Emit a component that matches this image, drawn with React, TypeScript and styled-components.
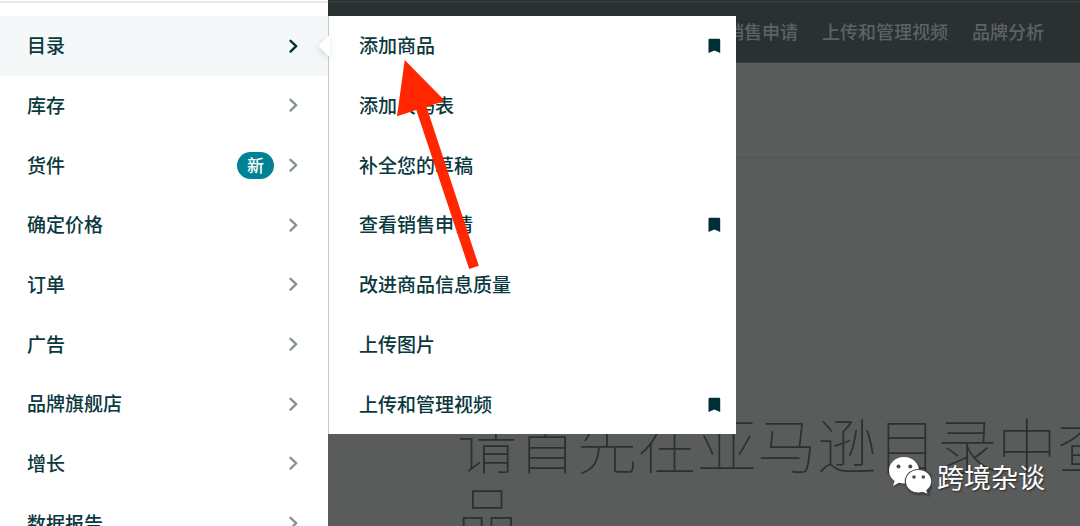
import React from "react";
import styled, { createGlobalStyle } from "styled-components";

const GlobalStyle = createGlobalStyle`
  * { box-sizing: border-box; }
  html, body { margin: 0; height: 100%; overflow: hidden; }
  body {
    background: #5a5c5b;
    color: #002f36;
    font-family: "Noto Sans CJK SC", "Noto Sans", sans-serif;
    font-size: 19px;
  }
  ul { list-style: none; margin: 0; padding: 0; }
  a { color: inherit; text-decoration: none; }
`;

const Page = styled.div`
  position: relative;
  display: grid;
  grid-template-columns: 328px minmax(0, 1fr);
  height: 100vh;
  overflow: hidden;
`;

const Sidebar = styled.nav`
  position: relative;
  padding-top: 1px;
  background: #fff;
`;

const SidebarTop = styled.div`
  height: 15px;
  border-top: 2px solid #e4ebe9;
`;

const MenuList = styled.ul<{ $height: number }>`
  display: grid;
  grid-auto-rows: 1fr;
  min-height: ${(p) => p.$height}px;
`;

const MenuItem = styled.li<{ $active?: boolean }>`
  display: grid;
  background: ${(p) => (p.$active ? "#f4f8f9" : "transparent")};
  color: ${(p) => (p.$active ? "#002f36" : "#869394")};
`;

const MenuLink = styled.a`
  display: flex;
  align-items: center;
  gap: 14px;
  padding: 0 29px 0 27px;
`;

const Label = styled.span`
  flex: 1;
  padding-bottom: 1px;
  color: #0a383e;
  font-weight: 500;
  line-height: 28px;
`;

const Badge = styled.span`
  padding: 0 10px 1px;
  border-radius: 14px;
  background: #008296;
  color: #fff;
  font-size: 17px;
  font-weight: 500;
  line-height: 26px;
`;

const Flyout = styled.div`
  position: absolute;
  z-index: 2;
  top: 16px;
  left: 328px;
  width: 408px;
  background: #fff;
  border-left: 1px solid #c6caca;
`;

const FlyoutLink = styled(MenuLink)`
  padding: 0 15px 0 30px;
`;

const Notch = styled.svg`
  position: absolute;
  top: 16px;
  left: -17px;
  filter: drop-shadow(-1px 2px 3px rgba(0, 47, 54, 0.14));
`;

const Content = styled.div`
  min-width: 0;
`;

const Header = styled.header`
  display: flex;
  flex-direction: column;
  height: 63px;
  padding-top: 1px;
  background: #293133;
  border-bottom: 1px solid #3b4244;
`;

const HeaderNav = styled.nav`
  display: flex;
  justify-content: flex-end;
  align-items: center;
  gap: 24px;
  flex: 1;
  padding: 0 36px 3px 0;
  border-top: 2px solid #3a3a3b;
  color: #5f6261;
  font-size: 18px;
  font-weight: 500;
  line-height: 26px;
  white-space: nowrap;
`;

const SubHeader = styled.div`
  height: 95px;
  border-bottom: 1px solid #525453;
`;

const Title = styled.h1`
  margin: 0;
  padding: 250px 0 0 129px;
  color: #293133;
  font-size: 60px;
  font-weight: 100;
  line-height: 69px;
  white-space: nowrap;
`;

const Arrow = styled.svg`
  position: absolute;
  z-index: 3;
  top: 60px;
  left: 396px;
`;

const Signature = styled.div`
  position: absolute;
  z-index: 4;
  right: 35px;
  bottom: 29px;
  display: flex;
  align-items: center;
  gap: 5px;
  color: #fff;
  font-size: 27px;
  line-height: 40px;
  text-shadow: 1px 1px 2px rgba(0, 0, 0, 0.6);
`;

const Chevron = () => (
  <svg width="11" height="14" viewBox="0 0 11 14" fill="none" aria-hidden="true">
    <path d="M2.500 1.800 8.200 7.200 2.500 12.600" stroke="currentColor" strokeWidth="2.300" strokeLinecap="round" strokeLinejoin="round" />
  </svg>
);

const Bookmark = () => (
  <svg width="13" height="15" viewBox="0 0 13 15" aria-hidden="true">
    <path d="M.5 2Q.5.8 1.700.8H11Q12.200.8 12.200 2V14.900L6.400 12.500.5 14.900Z" fill="#002f36" />
  </svg>
);

const WeChat = () => (
  <svg width="44" height="40" viewBox="0 0 44 40" aria-hidden="true">
    <g filter="drop-shadow(1px 1px 1px rgba(0,0,0,.5))">
      <path
        d="M16 0C7.500 0 1 5.900 1 13.500c0 4.300 2.200 8 5.600 10.500L5 29l6-3.200c1.600.5 3.300.7 5 .7 8.400 0 15-5.900 15-13.200S24.400 0 16 0Z"
        fill="#fff"
      />
      <path
        d="M30.500 12.500C23.200 12.500 17.300 17.600 17.300 24.200S23.200 36 30.500 36c1.500 0 3-.2 4.400-.7l5.300 2.400-1.400-4.300c2.900-2.100 4.900-5.400 4.900-9.200 0-6.600-5.900-11.700-13.200-11.700Z"
        fill="#fff"
        stroke="#4b4d4c"
        strokeWidth="1.200"
      />
    </g>
    <g fill="#4b4d4c">
      <circle cx="10.500" cy="9.500" r="2" />
      <circle cx="22.300" cy="9.500" r="2" />
      <circle cx="26" cy="20" r="1.800" />
      <circle cx="35.300" cy="20" r="1.800" />
    </g>
  </svg>
);

const sections = [
  { label: "目录", active: true },
  { label: "库存" },
  { label: "货件", badge: "新" },
  { label: "确定价格" },
  { label: "订单" },
  { label: "广告" },
  { label: "品牌旗舰店" },
  { label: "增长" },
  { label: "数据报告" },
];

const catalogLinks = [
  { label: "添加商品", saved: true },
  { label: "添加尺码表" },
  { label: "补全您的草稿" },
  { label: "查看销售申请", saved: true },
  { label: "改进商品信息质量" },
  { label: "上传图片" },
  { label: "上传和管理视频", saved: true },
];

const shortcuts = ["查看销售申请", "上传和管理视频", "品牌分析"];

export default function App() {
  return (
    <>
      <GlobalStyle />
      <Page>
        <Sidebar>
          <SidebarTop />
          <MenuList $height={537}>
            {sections.map((s) => (
              <MenuItem key={s.label} $active={s.active}>
                <MenuLink href="#">
                  <Label>{s.label}</Label>
                  {s.badge && <Badge>{s.badge}</Badge>}
                  <Chevron />
                </MenuLink>
              </MenuItem>
            ))}
          </MenuList>
        </Sidebar>

        <Content>
          <Header>
            <HeaderNav>
              {shortcuts.map((s) => (
                <a key={s} href="#">{s}</a>
              ))}
            </HeaderNav>
          </Header>
          <SubHeader />
          <Title>
            请首先在亚马逊目录中查
            <br />品
          </Title>
        </Content>

        <Flyout>
          <Notch width="18" height="28" viewBox="0 0 18 28" aria-hidden="true">
            <path d="M18 2.500 6.900 13.200Q6 14 6.900 14.800L18 25.500Z" fill="#fff" />
          </Notch>
          <MenuList $height={418}>
            {catalogLinks.map((c) => (
              <MenuItem key={c.label}>
                <FlyoutLink href="#">
                  <Label>{c.label}</Label>
                  {c.saved && <Bookmark />}
                </FlyoutLink>
              </MenuItem>
            ))}
          </MenuList>
        </Flyout>

        <Arrow width="84" height="210" viewBox="0 0 84 210" aria-hidden="true">
          <path d="M8.700 0 49 41 30.500 46.800 82.800 205.800 73.200 209 20.300 50 1 56.200Z" fill="#ff2600" />
        </Arrow>

        <Signature>
          <WeChat />
          <span>跨境杂谈</span>
        </Signature>
      </Page>
    </>
  );
}
